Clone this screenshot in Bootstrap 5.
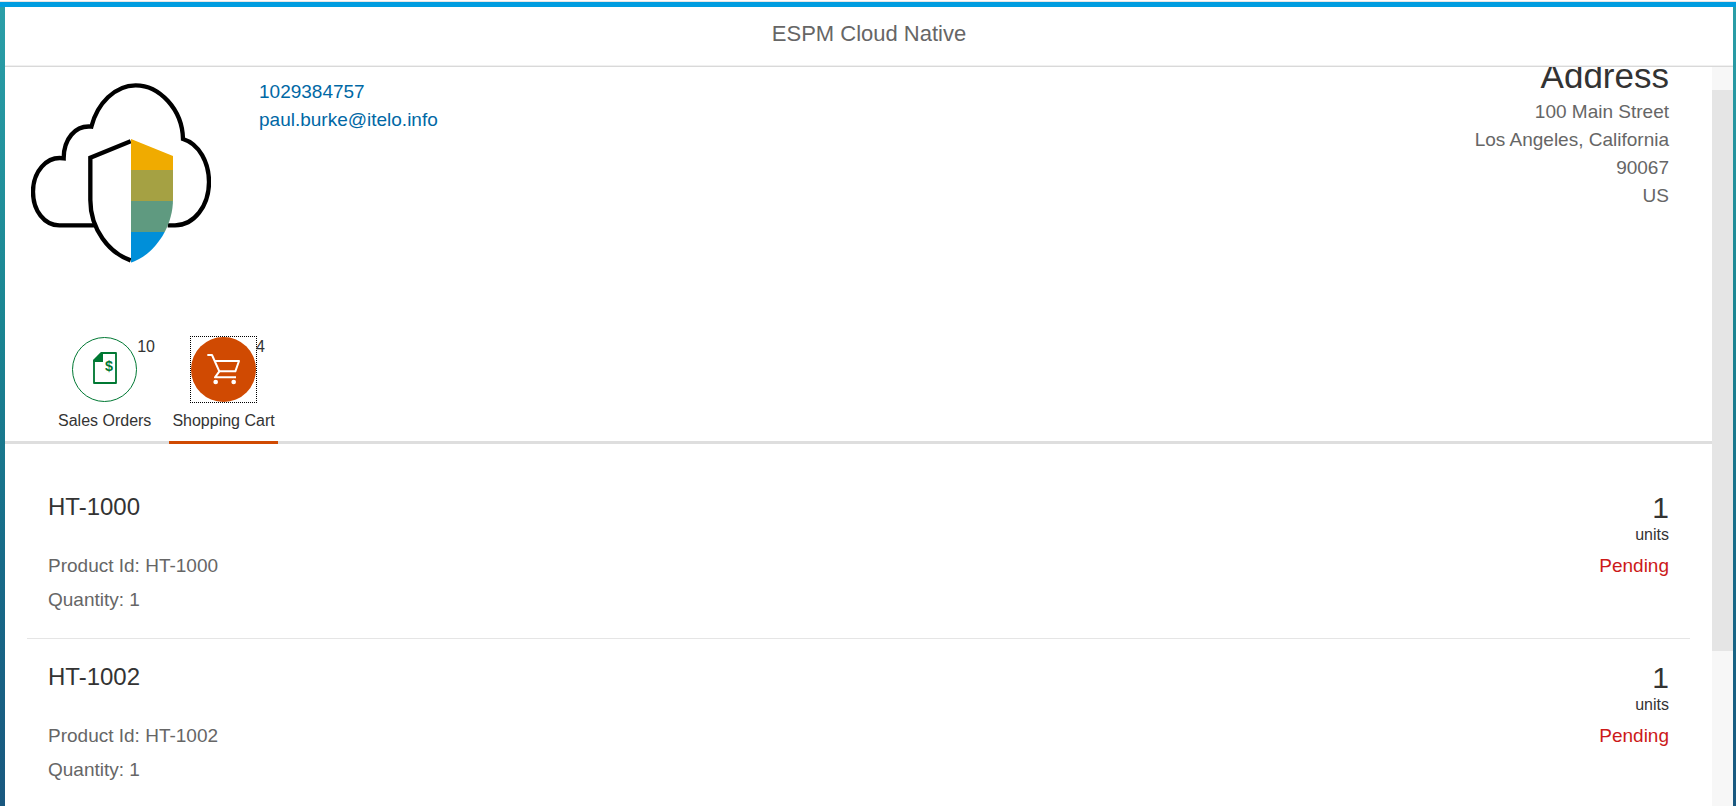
<!DOCTYPE html>
<html lang="en">
<head>
<meta charset="utf-8">
<meta name="viewport" content="width=device-width, initial-scale=1">
<title>ESPM Cloud Native</title>
<link rel="stylesheet" href="https://cdn.jsdelivr.net/npm/bootstrap@5.3.0/dist/css/bootstrap.min.css">
<style>
  body {
    font-family: "Liberation Sans", Arial, sans-serif;
    font-size: 19px; line-height: 28px; color: #666;
    background: linear-gradient(#2b9fa8, #1a8592 40%, #176a88 70%, #19587f);
  }
  .shell-strip { height: 7px; border-top: 1px solid #fff; background: #009de0; box-shadow: inset 0 1px #e5e5e5; }
  .app-frame { margin: 0 3px 0 5px; }
  .app-title { height: 60px; padding-bottom: 6px; border-bottom: 1px solid #d9d9d9; box-shadow: inset 0 -1px #f0f0f0; }
  .app-title h1 { font-size: 22px; line-height: 28px; font-weight: 400; }
  /* page body is shown scrolled down a little */
  .scrolled { margin-top: -13px; }
  .profile { padding: 0 43px 0 26px; min-height: 273px; }
  .profile-logo { width: 180px; height: 180px; margin-top: 29px; }
  .contact { padding-top: 24px; margin-left: 48px; }
  .contact a { color: #0068a5; }
  .address h2 { font-size: 35px; line-height: 44px; font-weight: 400; color: #333; }
  .section-tabs { border-bottom: 3px solid #dedede; padding-left: 50px; gap: 15px; }
  .tab-item { border: 0; border-bottom: 3px solid transparent; background: none; padding: 9px 3px 10px; margin-bottom: -3px; font-size: 16px; line-height: 20px; color: #333; }
  .tab-item.active { border-color: #d04a02; }
  .tab-icon { width: 67px; height: 67px; border: 1px solid transparent; margin-bottom: 8px; }
  .tab-item.active .tab-icon { border: 1px dotted #000; }
  .tab-count { position: absolute; left: 100%; top: 0; }
  .cart-list { padding: 25px 22px 0; }
  .cart-item { padding: 22px 21px 21px; border-bottom: 1px solid #e5e5e5; }
  .cart-item h3 { font-size: 24px; line-height: 32px; margin-bottom: 26px; font-weight: 400; color: #333; }
  .cart-item p { line-height: 34px; }
  .amount { font-size: 30px; line-height: 34px; color: #333; }
  .unit { font-size: 16px; line-height: 19px; margin-bottom: 5px; color: #333; }
  .state { line-height: 34px; color: #cc1919; }
  .scroll-track { width: 21px; background: #f7f7f7; padding-top: 23px; }
  .scroll-thumb { height: 78.3%; background: #e5e5e5; }
</style>
</head>
<body class="vh-100 overflow-hidden d-flex flex-column">
  <div class="shell-strip flex-shrink-0"></div>
  <div class="app-frame bg-white flex-grow-1 d-flex flex-column overflow-hidden">
    <header class="app-title flex-shrink-0 d-flex align-items-center justify-content-center">
      <h1 class="m-0">ESPM Cloud Native</h1>
    </header>
    <div class="d-flex flex-grow-1 overflow-hidden">
      <main class="flex-grow-1 overflow-hidden">
        <div class="scrolled">
          <section class="profile d-flex align-items-start">
            <svg class="profile-logo flex-shrink-0" viewBox="93 69 540 540" role="img" aria-label="Cloud with shield">
              <path fill="none" stroke="#000" stroke-width="13" d="M288 496H178C133 496 99 452 99 395C99 336 139 287 191 295C191 238 225 195 274 200C292 130 345 76 407 76C478 76 547 148 549 237C598 252 627 308 627 366C627 438 582 496 525 496H503"/>
              <path fill="#fff" stroke="#000" stroke-width="13" d="M392 244L271 293V420C271 508 328 579 392 601"/>
              <clipPath id="shield"><path d="M393 237L519 288V418C519 506 460 586 393 608Z"/></clipPath>
              <g clip-path="url(#shield)">
                <path fill="#f0ab00" d="M393 237H519V330H393z"/>
                <path fill="#a5a143" d="M393 330H519V423H393z"/>
                <path fill="#5f9a80" d="M393 423H519V516H393z"/>
                <path fill="#008fd9" d="M393 516H519V609H393z"/>
              </g>
            </svg>
            <div class="contact d-flex flex-column">
              <a class="text-decoration-none" href="tel:1029384757">1029384757</a>
              <a class="text-decoration-none" href="mailto:paul.burke@itelo.info">paul.burke@itelo.info</a>
            </div>
            <address class="address ms-auto mb-0 text-end">
              <h2 class="m-0">Address</h2>
              <div>100 Main Street</div>
              <div>Los Angeles, California</div>
              <div>90067</div>
              <div>US</div>
            </address>
          </section>

          <nav class="section-tabs d-flex" role="tablist" aria-label="Customer sections">
            <button type="button" class="tab-item d-flex flex-column align-items-center" role="tab" aria-selected="false">
              <span class="tab-icon position-relative">
                <svg class="d-block w-100 h-100" viewBox="216 81 195 195" aria-hidden="true">
                  <circle cx="313.500" cy="178.500" r="96" fill="#fff" stroke="#007833" stroke-width="3"/>
                  <path fill="none" stroke="#007833" stroke-width="5.500" stroke-linejoin="round" d="M304 129H348V219H282V151Z"/>
                  <path fill="#007833" d="M304 127H309V156H280V150Z"/>
                  <text x="327" y="184" text-anchor="middle" font-size="43" font-weight="700" fill="#007833">$</text>
                </svg>
                <span class="tab-count">10</span>
              </span>
              <span>Sales Orders</span>
            </button>
            <button type="button" class="tab-item active d-flex flex-column align-items-center" role="tab" aria-selected="true">
              <span class="tab-icon position-relative">
                <svg class="d-block w-100 h-100" viewBox="573 81 195 195" aria-hidden="true">
                  <circle cx="670.500" cy="178.500" r="97.500" fill="#d04a02"/>
                  <g fill="none" stroke="#fff" stroke-width="6" stroke-linejoin="round">
                    <path d="M622 135H636L658 184L645 202H708"/>
                    <path d="M645 153H717L706 184H658"/>
                  </g>
                  <circle cx="647" cy="216" r="7" fill="#fff"/>
                  <circle cx="701" cy="216" r="7" fill="#fff"/>
                </svg>
                <span class="tab-count">4</span>
              </span>
              <span>Shopping Cart</span>
            </button>
          </nav>

          <ul class="cart-list list-unstyled m-0">
            <li class="cart-item d-flex justify-content-between">
              <div>
                <h3 class="mt-0">HT-1000</h3>
                <p class="m-0">Product Id: HT-1000</p>
                <p class="m-0">Quantity: 1</p>
              </div>
              <div class="text-end">
                <div class="amount">1</div>
                <div class="unit">units</div>
                <div class="state">Pending</div>
              </div>
            </li>
            <li class="cart-item d-flex justify-content-between">
              <div>
                <h3 class="mt-0">HT-1002</h3>
                <p class="m-0">Product Id: HT-1002</p>
                <p class="m-0">Quantity: 1</p>
              </div>
              <div class="text-end">
                <div class="amount">1</div>
                <div class="unit">units</div>
                <div class="state">Pending</div>
              </div>
            </li>
          </ul>
        </div>
      </main>
      <div class="scroll-track flex-shrink-0" aria-hidden="true"><div class="scroll-thumb"></div></div>
    </div>
  </div>
<script src="https://cdn.jsdelivr.net/npm/bootstrap@5.3.0/dist/js/bootstrap.bundle.min.js"></script>
</body>
</html>
